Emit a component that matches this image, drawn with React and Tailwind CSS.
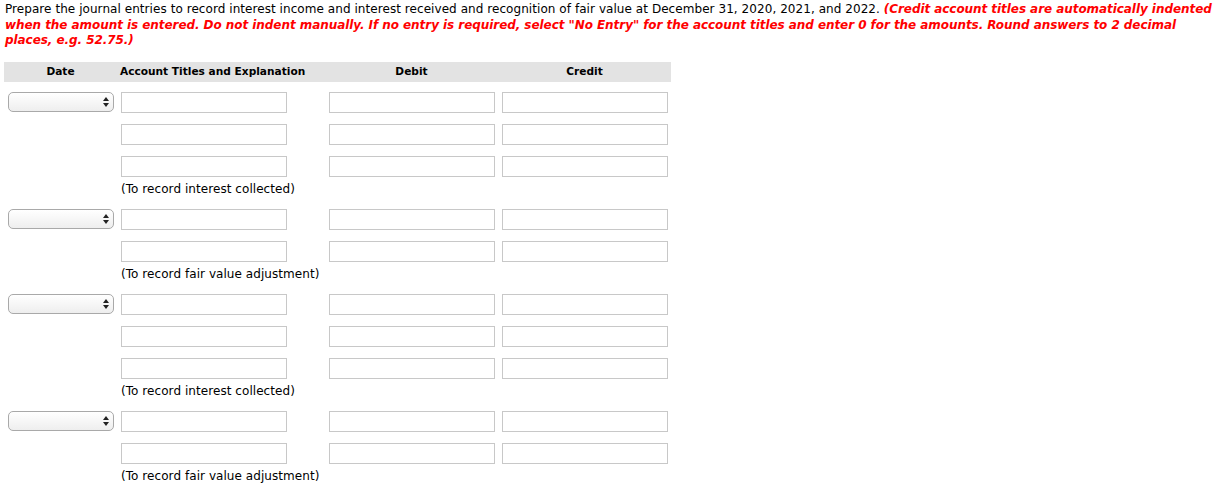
import React from "react";

function DateSelect() {
  return (
    <div className="relative w-[106px] h-[20px]">
      <select className="appearance-none block w-full h-full rounded-[5px] border border-[#a9a9a9] bg-gradient-to-b from-white to-[#eeeeee] outline-none"></select>
      <svg
        className="pointer-events-none absolute right-[5px] top-[5px]"
        width="6"
        height="10"
        viewBox="0 0 6 10"
      >
        <path d="M3 0 L6 4 L0 4 Z" fill="#222" />
        <path d="M0 6 L6 6 L3 10 Z" fill="#222" />
      </svg>
    </div>
  );
}

function Box() {
  return (
    <input
      type="text"
      className="block w-[166px] h-[21px] border border-[#c8c8c8] bg-white outline-none"
    />
  );
}

function InputRow({ withDate }) {
  return (
    <div className="flex h-[32px] pt-[10px]">
      <div className="w-[113px] pl-[4px]">{withDate ? <DateSelect /> : null}</div>
      <div className="w-[208px] pl-[4px]">
        <Box />
      </div>
      <div className="w-[173px] pl-[4px]">
        <Box />
      </div>
      <div className="w-[173px] pl-[4px]">
        <Box />
      </div>
    </div>
  );
}

function LabelRow({ text }) {
  return (
    <div className="flex h-[21px] leading-[23px]">
      <div className="w-[113px]" />
      <div className="pl-[4px] whitespace-nowrap tracking-[0.06px]">{text}</div>
    </div>
  );
}

function Entry({ rows, label }) {
  return (
    <div>
      {Array.from({ length: rows }).map((_, i) => (
        <InputRow key={i} withDate={i === 0} />
      ))}
      <LabelRow text={label} />
    </div>
  );
}

export default function App() {
  const entries = [
    { rows: 3, label: "(To record interest collected)" },
    { rows: 2, label: "(To record fair value adjustment)" },
    { rows: 3, label: "(To record interest collected)" },
    { rows: 2, label: "(To record fair value adjustment)" },
  ];
  return (
    <div className="w-[1223px] min-h-[486px] bg-white pl-[4px] text-[12px] text-black font-['DejaVu_Sans',sans-serif]">
      <p className="pl-[1px] pt-[2px] leading-[15.5px]">
        <span className="tracking-[0.06px]">
          Prepare the journal entries to record interest income and interest received and recognition of fair value at December 31, 2020, 2021, and 2022.
        </span>{" "}
        <span className="font-bold italic text-[#ff0000] tracking-[-0.06px]">
          (Credit account titles are automatically indented when the amount is entered. Do not indent manually. If no entry is required, select "No Entry" for the account titles and enter 0 for the amounts. Round answers to 2 decimal places, e.g. 52.75.)
        </span>
      </p>
      <div className="mt-[13px] w-[667px]">
        <div className="flex h-[20px] items-center pt-[1px] bg-[#e3e3e3] font-bold text-[10.6px]">
          <div className="w-[113px] text-center">Date</div>
          <div className="w-[208px] pl-[3px]">Account Titles and Explanation</div>
          <div className="w-[173px] text-center">Debit</div>
          <div className="w-[173px] text-center">Credit</div>
        </div>
        {entries.map((e, i) => (
          <Entry key={i} rows={e.rows} label={e.label} />
        ))}
      </div>
    </div>
  );
}
